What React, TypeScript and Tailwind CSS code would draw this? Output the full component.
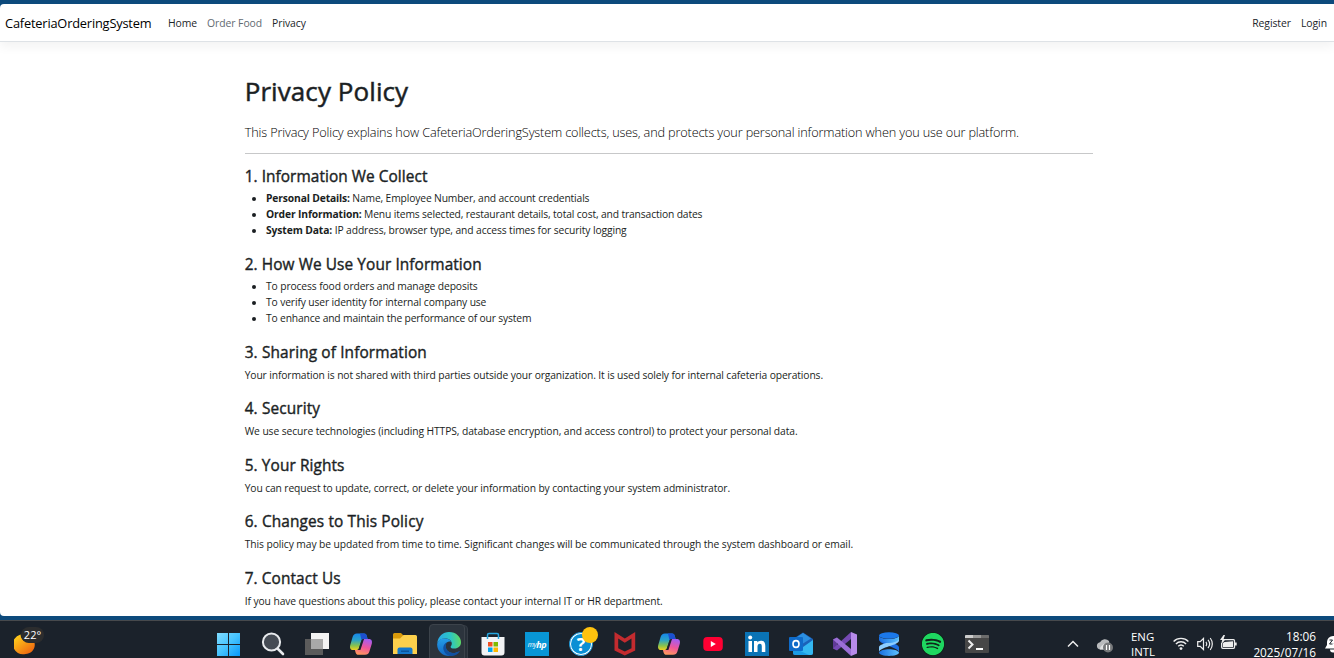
import React from "react";
import { FaSpotify } from "react-icons/fa";

type Item = { bold?: string; text: string; t: string };
type Section = { title: string; ht: string; text?: string; tt?: string; items?: Item[] };

const sections: Section[] = [
  {
    title: "1. Information We Collect",
    ht: "tracking-[0.06px]",
    items: [
      { bold: "Personal Details:", text: "Name, Employee Number, and account credentials", t: "tracking-[-0.145px]" },
      { bold: "Order Information:", text: "Menu items selected, restaurant details, total cost, and transaction dates", t: "tracking-[-0.14px]" },
      { bold: "System Data:", text: "IP address, browser type, and access times for security logging", t: "tracking-[-0.113px]" },
    ],
  },
  {
    title: "2. How We Use Your Information",
    ht: "tracking-[0.09px]",
    items: [
      { text: "To process food orders and manage deposits", t: "tracking-[-0.12px]" },
      { text: "To verify user identity for internal company use", t: "tracking-[-0.13px]" },
      { text: "To enhance and maintain the performance of our system", t: "tracking-[-0.16px]" },
    ],
  },
  { title: "3. Sharing of Information", ht: "tracking-[0.13px]", text: "Your information is not shared with third parties outside your organization. It is used solely for internal cafeteria operations.", tt: "tracking-[-0.119px]" },
  { title: "4. Security", ht: "tracking-[0.12px]", text: "We use secure technologies (including HTTPS, database encryption, and access control) to protect your personal data.", tt: "tracking-[-0.086px]" },
  { title: "5. Your Rights", ht: "tracking-[0.1px]", text: "You can request to update, correct, or delete your information by contacting your system administrator.", tt: "tracking-[-0.118px]" },
  { title: "6. Changes to This Policy", ht: "tracking-[0.13px]", text: "This policy may be updated from time to time. Significant changes will be communicated through the system dashboard or email.", tt: "tracking-[-0.081px]" },
  { title: "7. Contact Us", ht: "tracking-[0.1px]", text: "If you have questions about this policy, please contact your internal IT or HR department.", tt: "tracking-[-0.09px]" },
];

const svg = "h-6 w-6 shrink-0";

function Copilot({ id }: { id: string }) {
  return (
    <svg className={svg} viewBox="0 0 24 24">
      <defs>
        <linearGradient id={id + "a"} x1="0" y1="0" x2="0" y2="1">
          <stop offset="0" stopColor="#1686ea" />
          <stop offset=".4" stopColor="#2aa3c8" />
          <stop offset=".75" stopColor="#8cc34a" />
          <stop offset="1" stopColor="#f0d020" />
        </linearGradient>
        <linearGradient id={id + "b"} x1=".6" y1="0" x2=".3" y2="1">
          <stop offset="0" stopColor="#a75cf0" />
          <stop offset=".5" stopColor="#f0569a" />
          <stop offset="1" stopColor="#ff9a5c" />
        </linearGradient>
      </defs>
      <path d="M8 1.500h7c1.600 0 2.300.8 2.700 2.200L18.600 7H15c-1.500 0-2.300.6-2.800 2.200L10 16c-.4 1.400-1.100 2-2.600 2H4.200C1.200 18 .6 15.600 1.200 13.200L3.600 5C4.300 2.700 5.600 1.500 8 1.500Z" fill={`url(#${id}a)`} />
      <path d="M11 1.500h4c1.600 0 2.300.8 2.700 2.200L18.600 7H15c-1.200 0-2 .4-2.500 1.300Z" fill="#1c4fd0" />
      <path d="M16 22.800H9.500c-1.600 0-2.400-.9-2.900-2.400L5.900 18h2c1.500 0 2.300-.7 2.800-2.200l2-6.500C13.200 7.700 14 7 15.500 7h4.300c3 0 3.600 2.300 3 4.700l-2.400 7.800c-.7 2.200-2 3.300-4.400 3.300Z" fill={`url(#${id}b)`} />
      <path d="M12.200 9.200C12.700 7.600 13.500 7 15 7l-3.600 11H7.400c1.500 0 2.200-.6 2.600-2Z" fill="#1b222b" />
    </svg>
  );
}

const icons: React.ReactNode[] = [
  <svg className={svg} viewBox="0 0 24 24">
    <defs><linearGradient id="win" x1="0" y1="0" x2="1" y2="1"><stop stopColor="#80dcff" /><stop offset=".5" stopColor="#45c3ff" /><stop offset="1" stopColor="#0798fa" /></linearGradient></defs>
    <path d="M0 1h11v11H0ZM12 1h11v11H12ZM0 13h11v11H0ZM12 13h11v11H12Z" fill="url(#win)" />
  </svg>,
  <svg className={svg} viewBox="0 0 24 24" fill="none" stroke="#e8eaed">
    <circle cx="10.500" cy="10" r="8.600" fill="#454b54" strokeWidth="2" />
    <path d="m17 17 5 5" strokeWidth="2.600" strokeLinecap="round" />
  </svg>,
  <svg className={svg} viewBox="0 0 24 24">
    <path d="M6 1h18v16H6Z" fill="#f3f3f3" /><path d="M0 7h18v16H0Z" fill="#5b5b5b" /><path d="M6 7h12v10H6Z" fill="#a9a9a9" />
  </svg>,
  <Copilot id="c1" />,
  <svg className={svg} viewBox="0 0 24 24">
    <path d="M0 2.500A1.500 1.500 0 0 1 1.500 1H8l2.500 2.500L8 8H0Z" fill="#d99a0b" />
    <path d="M0 6.500h7L10.500 3H22.500A1.500 1.500 0 0 1 24 4.500V22H0Z" fill="#fdd04c" />
    <path d="M4.500 22v-4.500a2 2 0 0 1 2-2h11a2 2 0 0 1 2 2V22Z" fill="#1478cc" /><path d="M8 18.500h8V20H8Z" fill="#0b559c" />
  </svg>,
  <svg className={svg} viewBox="0 0 24 24">
    <defs>
      <linearGradient id="ed1" x1="0" y1=".3" x2="1" y2=".2"><stop stopColor="#2aa9e8" /><stop offset=".55" stopColor="#2cc6c4" /><stop offset="1" stopColor="#63dc5c" /></linearGradient>
      <linearGradient id="ed2" x1="0" y1="0" x2="0" y2="1"><stop stopColor="#249ee8" /><stop offset="1" stopColor="#1267c4" /></linearGradient>
    </defs>
    <path d="M.3 11C.9 4.500 6 0 12 0c7.200 0 12 5 12 10.300 0 3.900-3 6.300-6.400 6.300-2.800 0-4-.9-4-1.700 0-.9 1.200-1.100 1.200-3.300C14.800 8.500 11.600 6.600 8 6.600 4.500 6.600 1.700 8.300.3 11Z" fill="url(#ed1)" />
    <path d="M.2 12C.8 8.200 4 6.300 8 6.500c3.200.1 5.700 1.600 6.500 3.500-1.400-.7-3.500-.6-4.700.6C7.600 12.700 8.300 17 11 19.300c2.700 2.200 6.900 2.500 10.500.3C19.500 22.500 16 24 12.300 24 5.300 24-.2 18.500.2 12Z" fill="url(#ed2)" />
    <path d="M10.200 10.300c-2.400 2.400-1.600 6.800 1 9 3 2.400 7.100 2.200 10.800-.1.500-.3.800.1.500.5C20.300 22.900 16.300 24.500 12.500 24 8.500 22.500 6 18.800 6.300 15.500c.2-2.500 1.700-4.500 3.900-5.200Z" fill="#11509f" />
  </svg>,
  <svg className={svg} viewBox="0 0 24 24">
    <path d="M.5 5h23v15.500a3 3 0 0 1-3 3h-17a3 3 0 0 1-3-3Z" fill="#f2f3f5" />
    <path d="M6.500 7V3c0-1 .5-1.500 1.500-1.500h8c1 0 1.500.5 1.500 1.500v4" fill="none" stroke="#26a6e0" strokeWidth="1.500" />
    <path d="M7 10h4.500v4.500H7Z" fill="#f25022" /><path d="M12.500 10H17v4.500h-4.500Z" fill="#7fba00" /><path d="M7 15.500h4.500V20H7Z" fill="#00a4ef" /><path d="M12.500 15.500H17V20h-4.500Z" fill="#ffb900" />
  </svg>,
  <span className="flex h-6 w-6 items-center justify-center bg-[#0896d6] font-['Open_Sans',sans-serif] text-[7px] leading-none tracking-[-0.4px] text-white italic">
    my<b className="text-[9px]">hp</b>
  </span>,
  <span className="relative flex h-6 w-6 items-center justify-center rounded-full border border-[#0a8fd4] bg-white p-px">
    <span className="flex h-5 w-5 items-center justify-center rounded-full bg-[#0a8fd4] font-['Open_Sans',sans-serif] text-[18px] leading-none font-bold text-white">?</span>
    <span className="absolute -top-[6px] -right-[6px] h-4 w-4 rounded-full bg-[#ffc20e]" />
  </span>,
  <svg className={svg} viewBox="0 0 24 24">
    <path d="m1.500 0 10.300 6.500L22.200 0v18.500L11.800 23.500 1.500 18.500Zm3.700 6.500v9.700l6.600 3.300 6.700-3.300V6.500l-6.700 4.200Z" fill="#c32b2f" fillRule="evenodd" />
  </svg>,
  <Copilot id="c2" />,
  <svg className={svg} viewBox="0 0 24 24">
    <rect x="2.300" y="5" width="19.500" height="14" rx="4" fill="#ff0033" /><path d="m9.800 9 5 3-5 3Z" fill="#fff" />
  </svg>,
  <svg className={svg} viewBox="0 0 24 24">
    <path d="M0 0h24v24H0Z" fill="#0a73b5" />
    <path d="M3.500 9H7v11H3.500ZM9 9h3.300v1.500c.7-1.100 1.900-1.800 3.600-1.800 3.400 0 4.400 2.200 4.400 5.200V20h-3.500v-5.400c0-1.600-.3-2.800-1.900-2.800s-2.400 1.100-2.400 2.800V20H9Z" fill="#fff" /><circle cx="5.200" cy="5.400" r="2" fill="#fff" />
  </svg>,
  <svg className={svg} viewBox="0 0 24 24">
    <path d="m4 7 10-6.500L24 7v14a2 2 0 0 1-2 2H6a2 2 0 0 1-2-2Z" fill="#1b62b8" />
    <path d="m6 6.500 8-5.500 8 5.500-8 5Z" fill="#2c8fe0" /><path d="m14 15 10-7v13a2 2 0 0 1-2 2H9Z" fill="#34b8f1" /><path d="M4 15.500 20 23H6a2 2 0 0 1-2-2Z" fill="#1a9be6" />
    <rect y="5" width="14" height="14" rx="1" fill="#0f6bc9" /><ellipse cx="7" cy="12" rx="3" ry="3.400" fill="none" stroke="#fff" strokeWidth="1.600" />
  </svg>,
  <svg className={svg} viewBox="0 0 24 24">
    <path d="M0 7.500 4 5.500v12.500L0 16.500Z" fill="#5f3a96" />
    <path d="M18 0v7L4 18.500 0 16.500Z" fill="#7549b3" />
    <path d="m0 7.500 4-2L18 17v7Z" fill="#9b6fd6" /><path d="m18 0 6 2.500v19L18 24Z" fill="#b78bea" />
  </svg>,
  <svg className={svg} viewBox="0 0 24 24">
    <defs><linearGradient id="ds" x1="0" x2="1"><stop stopColor="#1a6fe0" /><stop offset="1" stopColor="#5cc1ff" /></linearGradient></defs>
    <path d="M2 3.500v4c0 5 20 8 20 13v-5c0-5-20-6-20-12Z" fill="#1d6ee0" />
    <path d="M22 3.500v5C22 13.500 2 15 2 20.500v-5C2 10.500 22 10 22 3.500Z" fill="#8ccdff" />
    <path d="M2 3.500C2 8 22 8 22 3.500v4c-4 4.500-16 4.500-20 0Z" fill="url(#ds)" />
    <ellipse cx="12" cy="3.500" rx="10" ry="3.200" fill="#1b78ea" />
    <path d="M2 20.500c2-4.500 18-4.500 20 0 0 4.500-20 4.500-20 0Z" fill="url(#ds)" />
  </svg>,
  <FaSpotify className="h-6 w-6 rounded-full bg-[#10251b] p-[0.5px] text-[#1ed760]" />,
  <svg className={svg} viewBox="0 0 24 24">
    <rect y="3" width="24" height="18" rx="1" fill="#474747" /><path d="M0 4a1 1 0 0 1 1-1h7v3H0Z" fill="#ccc" /><path d="M8 3h8v3H8Z" fill="#999" /><path d="M16 3h7a1 1 0 0 1 1 1v2h-8Z" fill="#6c6c6c" />
    <path d="m3.500 8.500 4 4-4 4" fill="none" stroke="#eee" strokeWidth="2" /><path d="M11 16h7v2h-7Z" fill="#fff" />
  </svg>,
];

export default function App() {
  return (
    <div className="flex h-[658px] w-[1334px] flex-col overflow-hidden bg-[#0d4a7c] pt-1 font-['Open_Sans','Noto_Sans',sans-serif] text-[#212529]">
      <div className="flex h-[612px] shrink-0 flex-col overflow-hidden rounded-tl rounded-bl bg-white">
        <nav className="flex h-[38px] shrink-0 items-center border-b border-[#dee2e6] pr-[7px] pl-[5px] text-[10.4px] leading-4 tracking-[-0.06px] shadow-[0_5px_10px_rgba(0,0,0,0.05)]">
          <span className="w-[163px] text-[12.8px] tracking-[-0.18px] whitespace-nowrap text-black">CafeteriaOrderingSystem</span>
          <span className="w-[39px] pt-px">Home</span>
          <span className="w-[65px] pt-px whitespace-nowrap text-[#626a71]">Order Food</span>
          <span className="pt-px">Privacy</span>
          <span className="ml-auto pt-px">Register</span>
          <span className="ml-[10px] pt-px">Login</span>
        </nav>
        <main className="ml-[244.700px] w-[848px] pt-[32.700px] text-[10.3px] leading-4 whitespace-nowrap text-[#1a1e22]">
          <h1 className="mb-[15.200px] text-[26px] leading-8 tracking-[0.08px] [-webkit-text-stroke:0.5px_#212529]">Privacy Policy</h1>
          <p className="text-[12.7px] leading-5 font-light tracking-[-0.145px] text-black">This Privacy Policy explains how CafeteriaOrderingSystem collects, uses, and protects your personal information when you use our platform.</p>
          <hr className="mt-[11.400px] mb-[11.900px] border-[#c7c8c9]" />
          {sections.map((s) => (
            <section key={s.title} className="mb-4">
              <h2 className={`mb-[4.530px] pt-[0.800px] text-[15.4px] leading-[19.200px] [-webkit-text-stroke:0.4px_#212529] ${s.ht}`}>{s.title}</h2>
              {s.text && <p className={s.tt}>{s.text}</p>}
              {s.items && (
                <ul className="-mt-[0.600px] mb-[0.600px] list-disc pl-[21.330px]">
                  {s.items.map((i) => (
                    <li key={i.text} className={i.t}>{i.bold && <><b>{i.bold}</b> </>}{i.text}</li>
                  ))}
                </ul>
              )}
            </section>
          ))}
        </main>
      </div>
      <footer className="mt-1 flex h-12 shrink-0 border-t border-[#47494c] bg-[#1b222b] text-white">
        <div className="relative w-[207px] shrink-0">
          <svg className="absolute top-[12px] left-[14px] h-[22px] w-[22px]" viewBox="0 0 22 22">
            <defs><linearGradient id="moon" x1=".1" y1=".1" x2=".8" y2=".9"><stop stopColor="#ffcf1c" /><stop offset="1" stopColor="#ef6a10" /></linearGradient></defs>
            <path d="M6.500 1.500C7 7 11 10 20.500 9.800 22 16 17 21 11.500 21A10 10 0 0 1 6.500 1.500Z" fill="url(#moon)" />
          </svg>
          <span className="absolute top-[6px] left-[21px] h-4 w-[23px] rounded-full bg-[#2c2d2e] text-center text-[11px] leading-4">22°</span>
        </div>
        <div className="flex">
          {icons.map((icon, i) => (
            <div key={i} className={i === 5 ? "relative flex h-[46px] w-11 items-center justify-center" : "flex h-[46px] w-11 items-center justify-center"}>
              {i === 5 && <><span className="absolute top-[4px] left-[6px] h-12 w-[35px] rounded border border-[#353c45] bg-[#272f38]" /><span className="absolute top-[3px] left-[2px] h-12 w-9 rounded border border-[#3c434b] bg-[#2c343d]" /></>}
              <span className="relative flex">{icon}</span>
            </div>
          ))}
        </div>
        <div className="flex h-12 w-[335px] shrink-0 items-start overflow-hidden">
          <svg className="mt-[17px] ml-[68px] h-3 w-3 shrink-0" viewBox="0 0 12 12" fill="none" stroke="#eee" strokeWidth="1.500"><path d="m1 8.500 5-5 5 5" /></svg>
          <svg className="mt-[16px] ml-[17px] h-4 w-[18px] shrink-0" viewBox="0 0 18 16">
            <path d="M4 12.500a3.700 3.700 0 0 1 0-7.300A5.500 5.500 0 0 1 13 4l1 8.500Z" fill="#b9bbbd" /><path d="M4 12.500c0-4 4-5.500 7-7l3 1v6Z" fill="#e1e2e3" />
            <circle cx="12" cy="10.500" r="5" fill="#77797b" /><path d="M10.500 8v5M13.500 8v5" stroke="#fff" strokeWidth="1.200" />
          </svg>
          <div className="mt-[8px] ml-[17px] w-[42px] shrink-0 text-[11.4px] leading-[15px]"><p>ENG</p><p>INTL</p></div>
          <svg className="mt-[15px] h-4 w-4 shrink-0" viewBox="0 0 16 16" fill="none" stroke="#eee" strokeWidth="1.400">
            <path d="M.6 5.400c4-4 10.800-4 14.800 0M2.900 7.900c2.800-2.800 7.400-2.800 10.200 0M5.200 10.300c1.600-1.500 4-1.500 5.600 0" /><circle cx="8" cy="12.600" r="1.400" fill="#eee" stroke="none" />
          </svg>
          <svg className="mt-[15px] ml-[8px] h-4 w-4 shrink-0" viewBox="0 0 16 16" fill="none" stroke="#eee" strokeWidth="1.200">
            <path d="M.7 5.700h2.500L6.500 2.500v11L3.200 10.300H.7ZM9 5.800c1 1.400 1 3 0 4.400M11 3.900c2 2.500 2 5.700 0 8.200M13.200 2c2.800 3.500 2.800 8.500 0 12" />
          </svg>
          <svg className="mt-[14px] ml-[7px] h-4 w-[17px] shrink-0" viewBox="0 0 17 16">
            <path d="M5 4.700h8.500a1 1 0 0 1 1 1v6.600a1 1 0 0 1-1 1H2.700a1 1 0 0 1-1-1V8" fill="none" stroke="#eee" strokeWidth="1.300" /><path d="M4.500 7 13 6.300V12H3V8Z" fill="#eee" /><path d="M15 7.500h1.700v3H15ZM3.500 0 0 5h2.200L1 9.500 6 4H3.600L5 0Z" fill="#eee" />
          </svg>
          <div className="mt-[7px] ml-[9px] w-[70px] shrink-0 text-right text-[11.8px] leading-4 whitespace-nowrap"><p>18:06</p><p>2025/07/16</p></div>
          <svg className="mt-[14px] ml-[8px] h-[18px] w-[18px] shrink-0" viewBox="0 0 18 18">
            <path d="M1 13.500 3 10V7a6 6 0 0 1 12 0v3l2 3.500ZM6 14.500h6a3 3 0 0 1-6 0Z" fill="#fff" /><path d="M5.500 5h3l-3 4h3M10 5h3l-3 4h3" fill="none" stroke="#1b222b" />
          </svg>
        </div>
      </footer>
    </div>
  );
}
